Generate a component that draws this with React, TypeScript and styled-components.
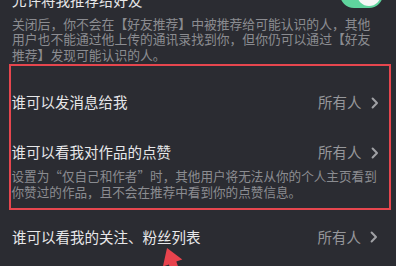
import React from "react";
import styled, { createGlobalStyle } from "styled-components";

const Global = createGlobalStyle`
  html, body {
    margin: 0;
    padding: 0;
    background: #2b2c32;
    overflow: hidden;
  }
  body {
    font-family: "Noto Sans CJK SC", "Noto Sans", sans-serif;
    -webkit-font-smoothing: antialiased;
  }
`;

const Page = styled.div`
  position: relative;
  width: 396px;
  height: 266px;
  box-sizing: border-box;
  padding: 0 12px;
  overflow: hidden;
  background: #2b2c32;
`;

const TopRow = styled.div`
  display: flex;
  align-items: center;
  justify-content: space-between;
  height: 28px;
  margin-top: -14px;
`;

const Title = styled.div`
  font-size: 14.5px;
  color: #e7e7e9;
  white-space: nowrap;
  line-height: 1;
`;

const Toggle = styled.div<{ $on?: boolean }>`
  position: relative;
  width: 43px;
  height: 28px;
  border-radius: 14px;
  background: ${(p) => (p.$on ? "#5fd49d" : "#55565c")};
  margin-right: 1px;
  margin-bottom: 12px;
  flex-shrink: 0;
  &::after {
    content: "";
    position: absolute;
    top: 2px;
    right: 2px;
    width: 24px;
    height: 24px;
    border-radius: 50%;
    background: #f6f7f6;
  }
`;

const Desc = styled.div<{ $lh: number; $size: number }>`
  font-size: ${(p) => p.$size}px;
  line-height: ${(p) => p.$lh}px;
  color: #8b8c91;
  white-space: nowrap;
`;

const TopDesc = styled(Desc)`
  margin-top: 1.5px;
`;

const Highlight = styled.div`
  margin: 1.5px -7px 0 -3px;
  border: 2.5px solid #e6464e;
  padding: 12px 4.5px 8.5px 0.5px;
`;

const Row = styled.div<{ $h: number }>`
  display: flex;
  align-items: center;
  justify-content: space-between;
  height: ${(p) => p.$h}px;
`;

const Item = styled.div`
  padding-top: 10px;
`;

const Value = styled.div`
  display: flex;
  align-items: center;
  gap: 9px;
  margin-right: 6px;
  font-size: 14.5px;
  color: #96979b;
  line-height: 1;
`;

const Chevron = () => (
  <svg width="8" height="12" viewBox="0 0 8 12">
    <path
      d="M1.6 1.5 L6 6 L1.6 10.5"
      fill="none"
      stroke="#a0a1a5"
      strokeWidth="2"
      strokeLinecap="round"
      strokeLinejoin="round"
    />
  </svg>
);

const ArrowLayer = styled.svg`
  position: absolute;
  left: 0;
  top: 0;
  pointer-events: none;
`;

const SettingRow = ({ title, h }: { title: string; h: number }) => (
  <Row $h={h}>
    <Title>{title}</Title>
    <Value>
      所有人
      <Chevron />
    </Value>
  </Row>
);

export default function App() {
  return (
    <>
      <Global />
      <Page>
        <TopRow>
          <Title>允许将我推荐给好友</Title>
          <Toggle $on />
        </TopRow>
        <TopDesc $lh={15.5} $size={12.8}>
          关闭后，你不会在【好友推荐】中被推荐给可能认识的人，其他
          <br />
          用户也不能通过他上传的通讯录找到你，但你仍可以通过【好友
          <br />
          推荐】发现可能认识的人。
        </TopDesc>
        <Highlight>
          <SettingRow title="谁可以发消息给我" h={50} />
          <Item>
            <SettingRow title="谁可以看我对作品的点赞" h={30} />
            <Desc $lh={16} $size={12.6}>
              设置为“仅自己和作者”时，其他用户将无法从你的个人主页看到
              <br />
              你赞过的作品，且不会在推荐中看到你的点赞信息。
            </Desc>
          </Item>
        </Highlight>
        <SettingRow title="谁可以看我的关注、粉丝列表" h={54} />
        <ArrowLayer width="396" height="266" viewBox="0 0 396 266">
          <polygon
            points="167,248 182.3,259.4 176.3,261.6 183,280 175,283 168.9,264.4 162.9,266.6"
            fill="#e8434d"
          />
        </ArrowLayer>
      </Page>
    </>
  );
}
